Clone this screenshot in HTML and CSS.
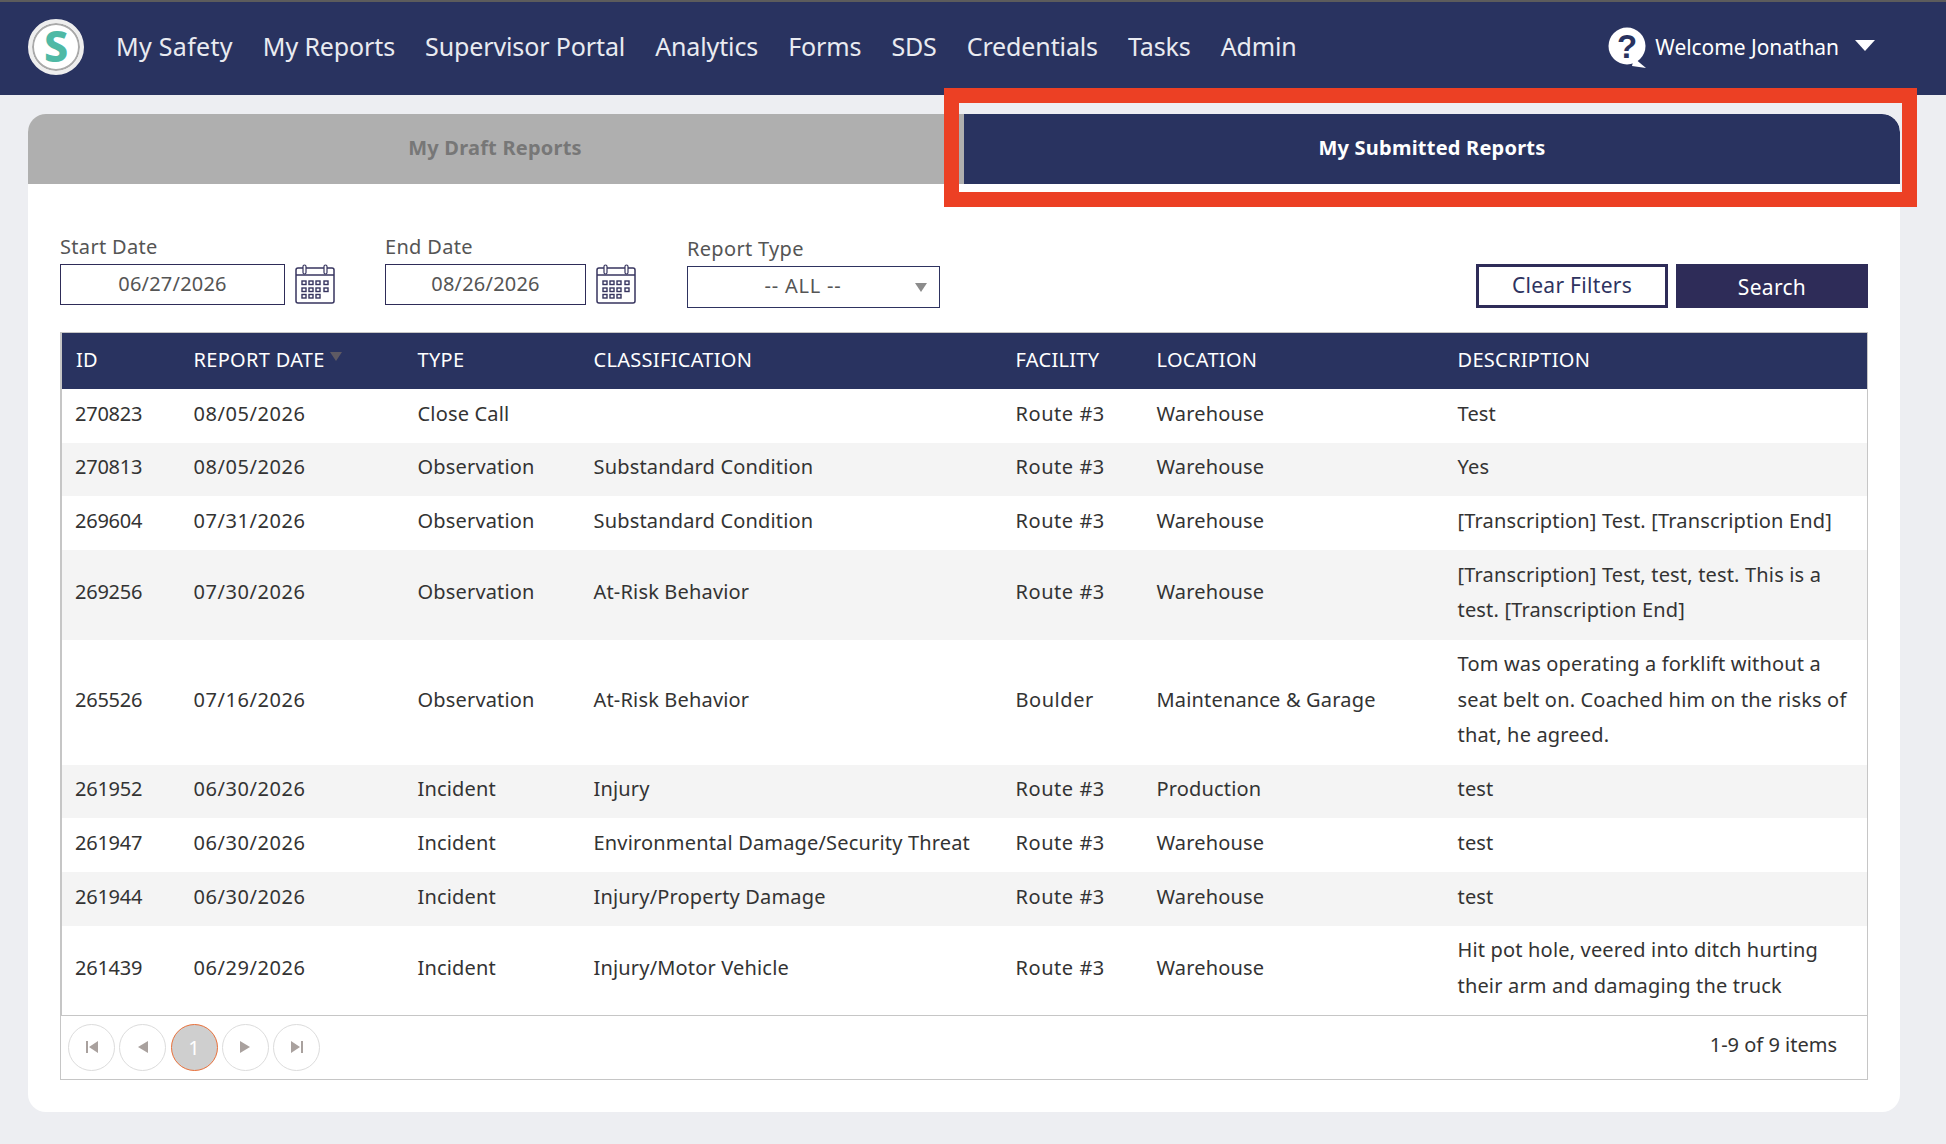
FILE: index.html
```html
<!DOCTYPE html>
<html lang="en">
<head>
    <meta charset="UTF-8">
    <meta name="viewport" content="width=device-width, initial-scale=1.0">
    <title>My Submitted Reports</title>
    <link rel="stylesheet" href="styles.css">
</head>
<body>
    <header class="topbar">
        <div class="logo"><span class="logo-s">S</span></div>
        <nav class="main-nav">
            <a>My Safety</a>
            <a>My Reports</a>
            <a>Supervisor Portal</a>
            <a>Analytics</a>
            <a>Forms</a>
            <a>SDS</a>
            <a>Credentials</a>
            <a>Tasks</a>
            <a>Admin</a>
        </nav>
        <div class="user-menu">
            <svg class="help-icon" viewBox="0 0 40 46" width="40" height="46">
                <circle cx="19" cy="20" r="18.5" fill="#fff"/>
                <path d="M26 32 L38 42 L24 40 Z" fill="#fff"/>
                <text x="19" y="32" text-anchor="middle" class="help-mark">?</text>
            </svg>
            <span class="welcome">Welcome Jonathan</span>
            <span class="caret"></span>
        </div>
    </header>

    <main class="page">
        <section class="card">
            <div class="tabs">
                <div class="tab tab-draft">My Draft Reports</div>
                <div class="tab tab-active">My Submitted Reports</div>
            </div>

            <div class="filters">
                <div class="filter">
                    <label>Start Date</label>
                    <div class="date-row">
                        <input class="date-input start" type="text" value="06/27/2026">
                        <svg class="cal" viewBox="0 0 40 40" width="40" height="40">
                            <rect x="1" y="4" width="38" height="35" rx="2" fill="none" stroke="#37355f" stroke-width="1.5"/>
                            <path d="M1 11 H39" stroke="#37355f" stroke-width="1.5"/>
                            <rect x="8" y="1" width="3" height="9" rx="1.5" fill="#fff" stroke="#37355f" stroke-width="1.2"/>
                            <rect x="29" y="1" width="3" height="9" rx="1.5" fill="#fff" stroke="#37355f" stroke-width="1.2"/>
                            <g fill="none" stroke="#37355f" stroke-width="1.4">
                                <rect x="7" y="17" width="4" height="3.5"/><rect x="14" y="17" width="4" height="3.5"/><rect x="21" y="17" width="4" height="3.5"/><rect x="29" y="17" width="4" height="3.5"/>
                                <rect x="7" y="24" width="4" height="3.5"/><rect x="14" y="24" width="4" height="3.5"/><rect x="21" y="24" width="4" height="3.5"/><rect x="29" y="24" width="4" height="3.5"/>
                                <rect x="7" y="30.5" width="4" height="3.5"/><rect x="14" y="30.5" width="4" height="3.5"/><rect x="21" y="30.5" width="4" height="3.5"/>
                            </g>
                        </svg>
                    </div>
                </div>
                <div class="filter">
                    <label>End Date</label>
                    <div class="date-row">
                        <input class="date-input end" type="text" value="08/26/2026">
                        <svg class="cal" viewBox="0 0 40 40" width="40" height="40">
                            <rect x="1" y="4" width="38" height="35" rx="2" fill="none" stroke="#37355f" stroke-width="1.5"/>
                            <path d="M1 11 H39" stroke="#37355f" stroke-width="1.5"/>
                            <rect x="8" y="1" width="3" height="9" rx="1.5" fill="#fff" stroke="#37355f" stroke-width="1.2"/>
                            <rect x="29" y="1" width="3" height="9" rx="1.5" fill="#fff" stroke="#37355f" stroke-width="1.2"/>
                            <g fill="none" stroke="#37355f" stroke-width="1.4">
                                <rect x="7" y="17" width="4" height="3.5"/><rect x="14" y="17" width="4" height="3.5"/><rect x="21" y="17" width="4" height="3.5"/><rect x="29" y="17" width="4" height="3.5"/>
                                <rect x="7" y="24" width="4" height="3.5"/><rect x="14" y="24" width="4" height="3.5"/><rect x="21" y="24" width="4" height="3.5"/><rect x="29" y="24" width="4" height="3.5"/>
                                <rect x="7" y="30.5" width="4" height="3.5"/><rect x="14" y="30.5" width="4" height="3.5"/><rect x="21" y="30.5" width="4" height="3.5"/>
                            </g>
                        </svg>
                    </div>
                </div>
                <div class="filter filter-type">
                    <label>Report Type</label>
                    <div class="select-box">
                        <span class="select-value">-- ALL --</span>
                        <span class="select-arrow"></span>
                    </div>
                </div>
                <div class="filter-actions">
                    <button class="btn btn-clear">Clear Filters</button>
                    <button class="btn btn-search">Search</button>
                </div>
            </div>

            <div class="grid">
                <table class="reports">
                    <colgroup>
                        <col class="c-id"><col class="c-date"><col class="c-type"><col class="c-class"><col class="c-fac"><col class="c-loc"><col class="c-desc">
                    </colgroup>
                    <thead>
                        <tr>
                            <th>ID</th>
                            <th>REPORT DATE <span class="sort"></span></th>
                            <th>TYPE</th>
                            <th>CLASSIFICATION</th>
                            <th>FACILITY</th>
                            <th>LOCATION</th>
                            <th>DESCRIPTION</th>
                        </tr>
                    </thead>
                    <tbody>
                        <tr><td>270823</td><td>08/05/2026</td><td>Close Call</td><td></td><td>Route #3</td><td>Warehouse</td><td>Test</td></tr>
                        <tr><td>270813</td><td>08/05/2026</td><td>Observation</td><td>Substandard Condition</td><td>Route #3</td><td>Warehouse</td><td>Yes</td></tr>
                        <tr><td>269604</td><td>07/31/2026</td><td>Observation</td><td>Substandard Condition</td><td>Route #3</td><td>Warehouse</td><td>[Transcription] Test. [Transcription End]</td></tr>
                        <tr><td>269256</td><td>07/30/2026</td><td>Observation</td><td>At-Risk Behavior</td><td>Route #3</td><td>Warehouse</td><td>[Transcription] Test, test, test. This is a<br>test. [Transcription End]</td></tr>
                        <tr><td>265526</td><td>07/16/2026</td><td>Observation</td><td>At-Risk Behavior</td><td>Boulder</td><td>Maintenance &amp; Garage</td><td>Tom was operating a forklift without a<br>seat belt on. Coached him on the risks of<br>that, he agreed.</td></tr>
                        <tr><td>261952</td><td>06/30/2026</td><td>Incident</td><td>Injury</td><td>Route #3</td><td>Production</td><td>test</td></tr>
                        <tr><td>261947</td><td>06/30/2026</td><td>Incident</td><td>Environmental Damage/Security Threat</td><td>Route #3</td><td>Warehouse</td><td>test</td></tr>
                        <tr><td>261944</td><td>06/30/2026</td><td>Incident</td><td>Injury/Property Damage</td><td>Route #3</td><td>Warehouse</td><td>test</td></tr>
                        <tr><td>261439</td><td>06/29/2026</td><td>Incident</td><td>Injury/Motor Vehicle</td><td>Route #3</td><td>Warehouse</td><td>Hit pot hole, veered into ditch hurting<br>their arm and damaging the truck</td></tr>
                    </tbody>
                </table>
                <div class="pager">
                    <div class="pager-btns">
                        <span class="page-btn"><svg viewBox="0 0 16 14" width="16" height="14"><path d="M2 1 H4 V13 H2 Z M14 1 V13 L5 7 Z" fill="#a9a19e"/></svg></span>
                        <span class="page-btn"><svg viewBox="0 0 16 14" width="16" height="14"><path d="M13 1 V13 L3 7 Z" fill="#a9a19e"/></svg></span>
                        <span class="page-btn current">1</span>
                        <span class="page-btn"><svg viewBox="0 0 16 14" width="16" height="14"><path d="M3 1 V13 L13 7 Z" fill="#a9a19e"/></svg></span>
                        <span class="page-btn"><svg viewBox="0 0 16 14" width="16" height="14"><path d="M2 1 V13 L11 7 Z M12 1 H14 V13 H12 Z" fill="#a9a19e"/></svg></span>
                    </div>
                    <div class="pager-info">1-9 of 9 items</div>
                </div>
            </div>
        </section>
    </main>

    <div class="callout"></div>
</body>
</html>
```

FILE: styles.css
```css
* {
    box-sizing: border-box;
}

html, body {
    margin: 0;
    height: 1144px;
    overflow: hidden;
}

body {
    background-color: #edeef2;
    font-family: "Noto Sans", "Open Sans", sans-serif;
    color: #333;
    position: relative;
}

/* top bar */
.topbar {
    height: 95px;
    background-color: #293360;
    border-top: 2px solid #5c5c5c;
    display: flex;
    align-items: center;
    padding: 0 71px 3px 28px;
}

.logo {
    width: 56px;
    height: 56px;
    border-radius: 50%;
    background-color: #fff;
    border: 4px solid #eeeeee;
    box-shadow: inset 0 0 0 2px #a9a9a9;
    display: flex;
    align-items: center;
    justify-content: center;
}

.logo-s {
    color: #4fb9a5;
    font-weight: 800;
    font-size: 43px;
    line-height: 1;
    margin-top: -3px;
}

.main-nav {
    display: flex;
    gap: 30px;
    margin-left: 32px;
    margin-bottom: 3px;
}

.main-nav a {
    color: #e9ebf1;
    font-size: 25px;
    letter-spacing: -0.12px;
}

.main-nav a:first-child {
    letter-spacing: 0.3px;
}

.user-menu {
    margin-left: auto;
    display: flex;
    align-items: center;
    color: #fff;
}

.help-icon {
    margin-top: 4px;
}

.help-mark {
    font-family: "Liberation Sans", sans-serif;
    font-weight: 700;
    font-size: 33px;
    fill: #293360;
}

.welcome {
    font-size: 21px;
    letter-spacing: -0.06px;
    margin-left: 7px;
}

.caret {
    width: 0;
    height: 0;
    margin-left: 16px;
    margin-bottom: 4px;
    border-left: 10px solid transparent;
    border-right: 10px solid transparent;
    border-top: 11px solid #fff;
}

/* card and tabs */
.page {
    padding: 19px 46px 0 28px;
}

.card {
    height: 998px;
    background-color: #fff;
    border-radius: 18px 18px 18px 18px;
    overflow: hidden;
}

.tabs {
    display: flex;
    height: 70px;
}

.tab {
    display: flex;
    align-items: center;
    justify-content: center;
    padding-bottom: 4px;
    font-weight: 700;
    font-size: 20px;
    letter-spacing: 0.22px;
}

.tab-draft {
    width: 936px;
    padding-right: 2px;
    background-color: #afafaf;
    color: #777;
}

.tab-active {
    flex: 1;
    background-color: #293360;
    color: #fff;
    border-top-right-radius: 18px;
}

/* filters */
.filters {
    display: flex;
    align-items: flex-start;
    padding: 50px 32px 0 32px;
    height: 124px;
}

.filter label {
    display: block;
    height: 30px;
    line-height: 25px;
    font-size: 20px;
    letter-spacing: 0.32px;
    color: #555;
}

.filter + .filter {
    margin-left: 50px;
}

.filter + .filter-type {
    margin-left: 51px;
}

.filter-type {
    margin-top: 2px;
}

.date-row {
    display: flex;
    align-items: center;
    gap: 10px;
}

.date-input {
    height: 41px;
    border: 1px solid #2e2c58;
    padding: 0 0 3px;
    text-align: center;
    font-family: inherit;
    font-size: 20px;
    letter-spacing: 0.2px;
    color: #555;
    outline: none;
}

.date-input.start {
    width: 225px;
}

.date-input.end {
    width: 201px;
}

.cal {
    margin-top: -1px;
}

.select-box {
    width: 253px;
    height: 42px;
    border: 1px solid #2e3360;
    display: flex;
    align-items: center;
    padding: 0 12px 3px 3px;
    font-size: 20px;
    color: #555;
}

.select-value {
    flex: 1;
    text-align: center;
    letter-spacing: 0.8px;
}

.select-arrow {
    width: 0;
    height: 0;
    margin-top: 3px;
    border-left: 6px solid transparent;
    border-right: 6px solid transparent;
    border-top: 9px solid #8c8c8c;
}

.filter-actions {
    margin-left: auto;
    margin-top: 30px;
    display: flex;
    gap: 8px;
}

.btn {
    width: 192px;
    height: 44px;
    font-family: inherit;
    font-size: 21px;
    letter-spacing: 0.3px;
    padding: 0;
    cursor: pointer;
}

.btn-clear {
    background-color: #fff;
    color: #2e3360;
    border: 3px solid #2e2c58;
    padding-bottom: 3px;
}

.btn-search {
    background-color: #2e2c58;
    color: #fff;
    border: none;
    padding-top: 2px;
}

/* grid */
.grid {
    margin: 24px 32px 0 32px;
    height: 748px;
    border: 1px solid #c6c6c6;
}

.reports {
    width: 100%;
    border-collapse: collapse;
    table-layout: fixed;
    border-left: 1px solid #c6c6c6;
    font-size: 20px;
    letter-spacing: 0.17px;
}

.c-id { width: 118px; }
.c-date { width: 224px; }
.c-type { width: 176px; }
.c-class { width: 422px; }
.c-fac { width: 141px; }
.c-loc { width: 301px; }

.reports th {
    height: 56px;
    background-color: #293360;
    color: #fff;
    font-weight: 400;
    text-align: left;
    padding: 0 0 3px 14px;
    letter-spacing: 0.3px;
}

.reports td {
    padding: 6.5px 0 11.5px 14px;
    line-height: 35.7px;
    color: #333;
}

.reports td:nth-child(1) {
    padding-left: 13px;
    letter-spacing: -0.25px;
}

.reports td:nth-child(2),
.reports td:nth-child(5) {
    letter-spacing: 0.55px;
}

.reports tbody tr:nth-child(even) td {
    background-color: #f4f4f4;
}

.sort {
    display: inline-block;
    width: 0;
    height: 0;
    margin-bottom: 6px;
    border-left: 6px solid transparent;
    border-right: 6px solid transparent;
    border-top: 9px solid #5e5a63;
}

.pager {
    height: 63px;
    border-top: 1px solid #c6c6c6;
    display: flex;
    align-items: center;
    justify-content: space-between;
    padding: 0 30px 0 7px;
    font-size: 20px;
}

.pager-btns {
    display: flex;
    gap: 4.3px;
}

.page-btn {
    width: 47px;
    height: 47px;
    border: 1px solid #dcdcdc;
    border-radius: 50%;
    display: flex;
    align-items: center;
    justify-content: center;
}

.page-btn.current {
    background-color: #cfcfcf;
    border-color: #e8703a;
    color: #fff;
}

.pager-info {
    margin-bottom: 5px;
}

/* red annotation box over the active tab */
.callout {
    position: absolute;
    left: 944px;
    top: 88px;
    width: 973px;
    height: 119px;
    border: 15px solid #ec4024;
}
```
